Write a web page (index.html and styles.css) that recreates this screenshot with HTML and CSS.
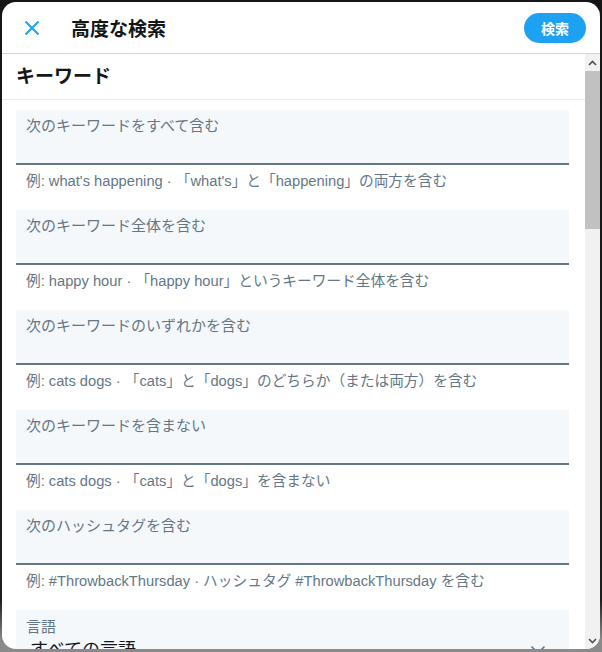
FILE: index.html
```html
<!DOCTYPE html>
<html lang="ja">
<head>
<meta charset="utf-8">
<title>高度な検索</title>
<link rel="stylesheet" href="styles.css">
</head>
<body>
<div class="modal">
  <header class="header">
    <button class="close" aria-label="閉じる">
      <svg viewBox="0 0 16 16" width="16" height="16"><path d="M1.5 1.5 L14.5 14.5 M14.5 1.5 L1.5 14.5" stroke="#1da1f2" stroke-width="2" fill="none" stroke-linecap="butt"/></svg>
    </button>
    <h1 class="title">高度な検索</h1>
    <button class="search-btn">検索</button>
  </header>
  <div class="body">
    <div class="content">
      <h2 class="section-title">キーワード</h2>
      <div class="fields">
        <div class="field">
          <div class="box"><span class="label">次のキーワードをすべて含む</span></div>
          <div class="hint">例: what's happening · 「what's」と「happening」の両方を含む</div>
        </div>
        <div class="field">
          <div class="box"><span class="label">次のキーワード全体を含む</span></div>
          <div class="hint">例: happy hour · 「happy hour」というキーワード全体を含む</div>
        </div>
        <div class="field">
          <div class="box"><span class="label">次のキーワードのいずれかを含む</span></div>
          <div class="hint">例: cats dogs · 「cats」と「dogs」のどちらか（または両方）を含む</div>
        </div>
        <div class="field">
          <div class="box"><span class="label">次のキーワードを含まない</span></div>
          <div class="hint">例: cats dogs · 「cats」と「dogs」を含まない</div>
        </div>
        <div class="field">
          <div class="box"><span class="label">次のハッシュタグを含む</span></div>
          <div class="hint">例: #ThrowbackThursday · ハッシュタグ #ThrowbackThursday を含む</div>
        </div>
        <div class="field">
          <div class="box select">
            <span class="label">言語</span>
            <div class="select-row">
              <span class="value">すべての言語</span>
              <svg class="chev" viewBox="0 0 16 10" width="16" height="10"><path d="M1.5 1.5 L8 8 L14.5 1.5" stroke="#657786" stroke-width="1.6" fill="none"/></svg>
            </div>
          </div>
        </div>
      </div>
    </div>
    <div class="scrollbar">
      <div class="sb-btn"><svg viewBox="0 0 9 6" width="9" height="6"><path d="M1 5 L4.5 1.5 L8 5" stroke="#505050" stroke-width="1.6" fill="none"/></svg></div>
      <div class="sb-track"><div class="sb-thumb"></div></div>
      <div class="sb-btn"><svg viewBox="0 0 9 6" width="9" height="6"><path d="M1 1 L4.5 4.5 L8 1" stroke="#505050" stroke-width="1.6" fill="none"/></svg></div>
    </div>
  </div>
</div>
</body>
</html>
```
FILE: styles.css
```css
html, body {
  margin: 0;
  padding: 0;
}
body {
  width: 602px;
  height: 652px;
  overflow: hidden;
  background: linear-gradient(#151515 0, #1e1e1e 600px, #8a8a8a 640px);
  font-family: "Liberation Sans", "Noto Sans CJK JP", sans-serif;
  padding: 2px 2px 3px 2px;
  box-sizing: border-box;
}
.modal {
  height: 647px;
  background: #fff;
  border-radius: 14px;
  overflow: hidden;
  display: flex;
  flex-direction: column;
}
.header {
  height: 51px;
  flex: none;
  display: flex;
  align-items: center;
  border-bottom: 1px solid #ccd6dd;
  padding: 0 14px 0 21px;
}
.close {
  border: 0;
  background: none;
  padding: 0;
  width: 18px;
  height: 18px;
  display: flex;
  align-items: center;
  justify-content: center;
  margin-top: 1px;
}
.title {
  margin: 0 0 0 30px;
  font-size: 19px;
  font-weight: 700;
  color: #14171a;
  font-family: "Noto Sans CJK JP", sans-serif;
  line-height: 24px;
  flex: 1;
}
.search-btn {
  border: 0;
  background: #1da1f2;
  color: #fff;
  font-family: "Noto Sans CJK JP", sans-serif;
  font-weight: 700;
  font-size: 14px;
  width: 62px;
  height: 30px;
  border-radius: 15px;
  padding: 0;
  margin-top: 1px;
}
.body {
  flex: 1;
  display: flex;
  min-height: 0;
}
.content {
  flex: 1;
  overflow: hidden;
}
.section-title {
  margin: 0;
  height: 46px;
  box-sizing: border-box;
  padding: 9px 14px 0;
  font-size: 19px;
  line-height: 24px;
  font-weight: 700;
  color: #14171a;
  font-family: "Noto Sans CJK JP", sans-serif;
  border-bottom: 1px solid #e6ecf0;
}
.fields {
  padding: 10px 16px 0 14px;
}
.box {
  height: 55px;
  box-sizing: border-box;
  background: #f5f8fa;
  border-bottom: 2px solid #657786;
  padding: 6px 10px 0;
}
.box .label {
  display: block;
  font-size: 15px;
  line-height: 20px;
  color: #657786;
}
.hint {
  height: 45px;
  box-sizing: border-box;
  padding: 6px 10px 0;
  font-size: 14.7px;
  line-height: 20px;
  color: #657786;
  white-space: nowrap;
}
.select {
  height: 60px;
  border-bottom: 0;
  padding-top: 7px;
}
.select-row {
  display: flex;
  align-items: center;
  justify-content: space-between;
  padding: 0 13px 0 4px;
}
.select-row .value {
  font-size: 18px;
  line-height: 26px;
  color: #14171a;
}
.scrollbar {
  width: 15px;
  flex: none;
  display: flex;
  flex-direction: column;
  background: #f1f1f1;
}
.sb-btn {
  height: 17px;
  display: flex;
  align-items: center;
  justify-content: center;
  flex: none;
}
.sb-track {
  flex: 1;
}
.sb-thumb {
  height: 158px;
  background: #c1c1c1;
}
```
